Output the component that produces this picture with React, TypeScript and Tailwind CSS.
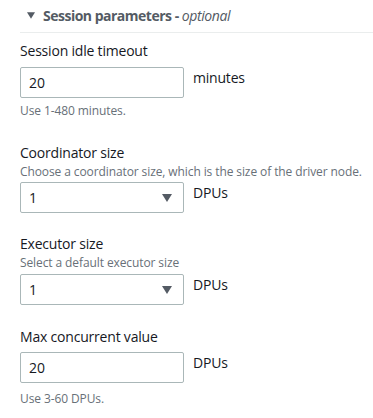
const font = { fontFamily: '"Open Sans", "Noto Sans", sans-serif' };

function Caret({ className }: { className: string }) {
  return (
    <svg viewBox="0 0 10 8" className={className}>
      <path d="M0 0h10L5 8z" fill="currentColor" />
    </svg>
  );
}

function TextField({ value, unit }: { value: string; unit: string }) {
  return (
    <div className="flex items-start gap-[9px]">
      <div className="w-[164px] h-[31px] border border-[#aab7b8] rounded-[2px] bg-white flex items-center px-[8px] text-[14px] text-[#16191f]">
        {value}
      </div>
      <span className="text-[14px] text-[#16191f] leading-[20px] pt-[1px] tracking-[-0.2px]">{unit}</span>
    </div>
  );
}

function SelectField({ value, unit }: { value: string; unit: string }) {
  return (
    <div className="flex items-start gap-[9px]">
      <div className="w-[164px] h-[31px] border border-[#aab7b8] rounded-[2px] bg-white flex items-center justify-between pl-[8px] pr-[11px] text-[14px] text-[#16191f]">
        <span>{value}</span>
        <Caret className="w-[10px] h-[8px] text-[#545b64]" />
      </div>
      <span className="text-[14px] text-[#16191f] leading-[20px] pt-[1px] tracking-[-0.2px]">{unit}</span>
    </div>
  );
}

export default function App() {
  return (
    <div className="w-[373px] h-[418px] bg-white overflow-hidden" style={font}>
      {/* Header */}
      <div className="flex items-center h-[32px] pl-[27px] pb-[1px]">
        <Caret className="w-[8px] h-[7px] text-[#545b64]" />
        <span className="ml-[8px] text-[14px] font-bold text-[#545b64] tracking-[-0.5px]">
          Session parameters - <i className="font-normal tracking-[-0.4px]">optional</i>
        </span>
      </div>
      <div className="ml-[20px] border-t border-[#eaeded]" />

      <div className="pl-[20px]">
        {/* Idle timeout */}
        <div className="pt-[8px]">
          <div className="text-[14px] text-[#16191f] leading-[20px] tracking-[-0.2px] mb-[6px]">Session idle timeout</div>
          <TextField value="20" unit="minutes" />
          <div className="text-[12px] text-[#687078] leading-[16px] mt-[5px] tracking-[-0.1px]">Use 1-480 minutes.</div>
        </div>

        {/* Coordinator */}
        <div className="pt-[24px]">
          <div className="text-[14px] text-[#16191f] leading-[20px] tracking-[-0.2px]">Coordinator size</div>
          <div className="text-[12px] text-[#687078] leading-[16px] mt-[1px] mb-[2px] tracking-[-0.1px]">
            Choose a coordinator size, which is the size of the driver node.
          </div>
          <SelectField value="1" unit="DPUs" />
        </div>

        {/* Executor */}
        <div className="pt-[21px]">
          <div className="text-[14px] text-[#16191f] leading-[20px] tracking-[-0.2px]">Executor size</div>
          <div className="text-[12px] text-[#687078] leading-[16px] mt-[1px] mb-[3px] tracking-[-0.1px]">
            Select a default executor size
          </div>
          <SelectField value="1" unit="DPUs" />
        </div>

        {/* Max concurrent */}
        <div className="pt-[22px]">
          <div className="text-[14px] text-[#16191f] leading-[20px] tracking-[-0.2px] mb-[5px]">Max concurrent value</div>
          <TextField value="20" unit="DPUs" />
          <div className="text-[12px] text-[#687078] leading-[16px] mt-[8px] tracking-[-0.1px]">Use 3-60 DPUs.</div>
        </div>
      </div>
    </div>
  );
}
